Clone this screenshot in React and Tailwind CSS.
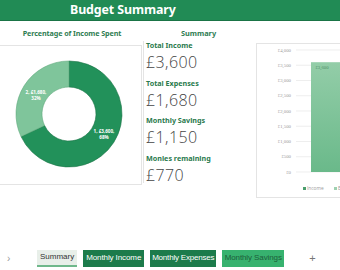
import React from 'react'

const Donut = () => {
  // 68% / 32% split, starting at 12 o'clock
  const cx = 69, cy = 113, R = 53, r = 27
  const pt = (rad, deg) => {
    const a = (deg * Math.PI) / 180
    return [cx + rad * Math.sin(a), cy - rad * Math.cos(a)]
  }
  const arc = (a0, a1) => {
    const large = a1 - a0 > 180 ? 1 : 0
    const [x0, y0] = pt(R, a0)
    const [x1, y1] = pt(R, a1)
    const [x2, y2] = pt(r, a1)
    const [x3, y3] = pt(r, a0)
    return `M${x0} ${y0} A${R} ${R} 0 ${large} 1 ${x1} ${y1} L${x2} ${y2} A${r} ${r} 0 ${large} 0 ${x3} ${y3} Z`
  }
  return (
    <svg width="142" height="138" viewBox="0 45 142 138" className="block">
      <path d={arc(0, 244.8)} fill="#22915a" stroke="#1b7447" strokeWidth="0.6" />
      <path d={arc(244.8, 360)} fill="#7fc59b" stroke="#5fa97c" strokeWidth="0.6" />
      <g fill="#fff" fontFamily="'Open Sans', sans-serif" fontWeight="700" fontSize="4.6" textAnchor="middle">
        <text x="104" y="132">1, £3,600,</text>
        <text x="104" y="138">68%</text>
        <text x="36" y="93">2, £1,680,</text>
        <text x="36" y="99">32%</text>
      </g>
    </svg>
  )
}

const BarChart = () => {
  const labels = ['£4,000', '£3,500', '£3,000', '£2,500', '£2,000', '£1,500', '£1,000', '£500', '£0']
  const top = 6, bottom = 128
  const step = (bottom - top) / 8
  const barTop = bottom - (3600 / 4000) * (bottom - top)
  return (
    <svg width="90" height="155" className="block">
      <defs>
        <linearGradient id="bar" x1="0" y1="0" x2="0" y2="1">
          <stop offset="0" stopColor="#93cda8" />
          <stop offset="1" stopColor="#6ab98a" />
        </linearGradient>
      </defs>
      {labels.map((l, i) => (
        <g key={l}>
          <line x1="39" x2="90" y1={top + i * step} y2={top + i * step} stroke="#e3e3e3" strokeWidth="0.6" />
          <text x="34" y={top + i * step + 1.6} textAnchor="end" fontSize="4.8" fill="#9a9a9a" fontFamily="'Liberation Serif', serif">{l}</text>
        </g>
      ))}
      <rect x="54" y={barTop} width="40" height={bottom - barTop} fill="url(#bar)" />
      <text x="65" y={barTop + 6.5} textAnchor="middle" fontSize="4.8" fill="#4f8f67" fontFamily="'Liberation Serif', serif">£3,600</text>
      <rect x="46" y="143" width="3" height="3" fill="#4a9e6d" />
      <text x="50" y="146.2" fontSize="4.8" fill="#9a9a9a" fontFamily="'Open Sans', sans-serif">Income</text>
      <rect x="77" y="143" width="3" height="3" fill="#9fd1b1" />
      <text x="81" y="146.2" fontSize="4.8" fill="#9a9a9a" fontFamily="'Open Sans', sans-serif">Ex</text>
    </svg>
  )
}

const stats = [
  ['Total Income', '£3,600'],
  ['Total Expenses', '£1,680'],
  ['Monthly Savings', '£1,150'],
  ['Monies remaining', '£770'],
]

const App = () => {
  return (
    <div className="w-[340px] h-[270px] bg-white overflow-hidden flex flex-col" style={{ fontFamily: "'Noto Sans', sans-serif" }}>
      {/* Title bar */}
      <div className="h-[21px] shrink-0 bg-[#218b55] border-b border-[#1a7446] flex items-center pl-[70px]">
        <span className="text-white font-bold text-[12.4px] leading-none tracking-[-0.1px]">Budget Summary</span>
      </div>

      <div className="flex">
        {/* Donut panel */}
        <div className="w-[142px] shrink-0">
          <div className="h-[24px] flex items-center justify-center pl-[2px]">
            <span className="text-[#2f7d52] font-bold text-[7.2px] tracking-[-0.1px]">Percentage of Income Spent</span>
          </div>
          <div className="border-y border-r border-[#e4e4e4]">
            <Donut />
          </div>
        </div>

        {/* Summary figures */}
        <div className="w-[113px] shrink-0">
          <div className="h-[20px] flex items-end justify-center pb-[4px]">
            <span className="text-[#2f7d52] font-bold text-[7.4px] leading-none">Summary</span>
          </div>
          <div className="border-l border-[#e4e4e4] pl-[2px] h-[142px] ml-[1px]">
            {stats.map(([label, value]) => (
              <div key={label} className="h-[37.7px]">
                <div className="text-[#2a7a4d] font-bold text-[7.2px] leading-[8px]">{label}</div>
                <div className="text-[#444] font-light text-[16px] leading-[27px] tracking-[0.4px]" style={{ fontFamily: "'Open Sans', sans-serif" }}>{value}</div>
              </div>
            ))}
          </div>
        </div>

        {/* Bar chart */}
        <div className="mt-[22px] ml-[1px] h-[155px] flex-1 border border-r-0 border-[#e4e4e4] overflow-hidden">
          <BarChart />
        </div>
      </div>

      {/* Sheet tabs */}
      <div className="mt-auto h-[20px] mb-[2px] flex items-center text-[8px] whitespace-nowrap" style={{ fontFamily: "'Liberation Sans', sans-serif" }}>
        <span className="w-[37px] pl-[7px] text-[#999] text-[10px]">›</span>
        <div className="flex gap-[6px]">
          <div className="h-[17px] px-[3px] bg-[#e8efe9] border-b-2 border-[#6fb88b] flex items-center text-[#333]">Summary</div>
          <div className="h-[17px] w-[61px] bg-[#1c7b4b] text-white flex items-center justify-center tracking-[-0.1px]">Monthly Income</div>
          <div className="h-[17px] w-[66px] bg-[#1c7b4b] text-white flex items-center justify-center tracking-[-0.2px]">Monthly Expenses</div>
          <div className="h-[17px] w-[62px] bg-[#37b26f] text-[#1d5e3a] flex items-center justify-center tracking-[-0.1px]">Monthly Savings</div>
        </div>
        <span className="ml-[25px] text-[#777] text-[11px]">+</span>
      </div>
    </div>
  )
}

export default App
